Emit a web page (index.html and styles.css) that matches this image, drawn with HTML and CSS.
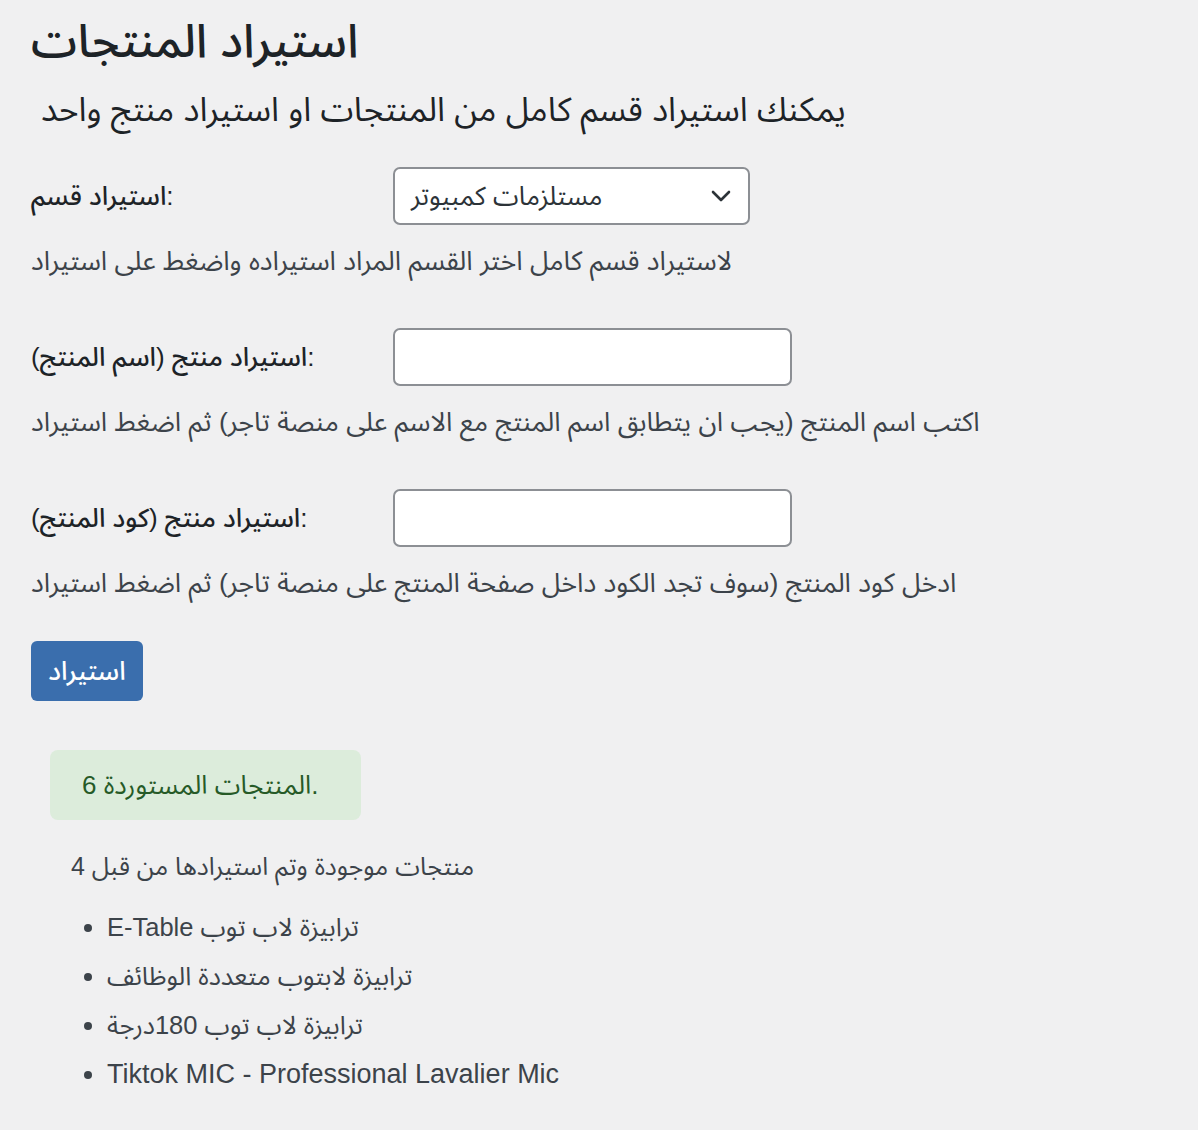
FILE: index.html
```html
<!DOCTYPE html>
<html lang="ar">
<head>
<meta charset="utf-8">
<title>استيراد المنتجات</title>
<link rel="stylesheet" href="styles.css">
</head>
<body>
<div class="wrap">
  <h1 class="title">استيراد المنتجات</h1>
  <h2 class="subtitle">يمكنك استيراد قسم كامل من المنتجات او استيراد منتج واحد</h2>

  <div class="field first">
    <label class="label">استيراد قسم:</label>
    <div class="select">
      <span class="select-text">مستلزمات كمبيوتر</span>
      <svg class="chevron" width="20" height="12" viewBox="0 0 20 12"><path d="M2 2 L10 10 L18 2" fill="none" stroke="#2c3338" stroke-width="2.6" stroke-linecap="round" stroke-linejoin="round"/></svg>
    </div>
  </div>
  <p class="desc">لاستيراد قسم كامل اختر القسم المراد استيراده واضغط على استيراد</p>

  <div class="field">
    <label class="label">استيراد منتج (اسم المنتج):</label>
    <div class="input"></div>
  </div>
  <p class="desc">اكتب اسم المنتج (يجب ان يتطابق اسم المنتج مع الاسم على منصة تاجر) ثم اضغط استيراد</p>

  <div class="field">
    <label class="label">استيراد منتج (كود المنتج):</label>
    <div class="input"></div>
  </div>
  <p class="desc">ادخل كود المنتج (سوف تجد الكود داخل صفحة المنتج على منصة تاجر) ثم اضغط استيراد</p>

  <button class="button">استيراد</button>

  <div class="notice">المنتجات المستوردة 6.</div>

  <p class="summary">منتجات موجودة وتم استيرادها من قبل 4</p>
  <ul class="list">
    <li>E-Table ترابيزة لاب توب</li>
    <li>ترابيزة لابتوب متعددة الوظائف</li>
    <li>ترابيزة لاب توب 180درجة</li>
    <li class="latin">Tiktok MIC - Professional Lavalier Mic</li>
  </ul>
</div>
</body>
</html>
```

FILE: styles.css
```css
html, body {
  margin: 0;
  padding: 0;
  background: #f0f0f1;
}
body {
  font-family: "Liberation Sans", "Noto Sans Arabic", "DejaVu Sans", sans-serif;
  color: #3c434a;
  font-size: 26.7px;
}
.wrap {
  padding: 11px 31px 0 31px;
}
.title {
  margin: 0;
  font-size: 46.5px;
  line-height: 60px;
  font-weight: 500;
  color: #1d2327;
}
.subtitle {
  margin: 17px 0 0 10px;
  font-size: 33.5px;
  line-height: 44px;
  font-weight: 400;
  color: #1d2327;
}
.field {
  display: flex;
  align-items: center;
  height: 58px;
  margin-top: 49px;
}
.field.first {
  margin-top: 35px;
}
.label {
  width: 362px;
  flex: none;
  font-weight: 500;
  color: #1d2327;
  font-size: 26px;
}
.select {
  box-sizing: border-box;
  width: 357px;
  height: 58px;
  background: #fff;
  border: 2px solid #8c8f94;
  border-radius: 7px;
  display: flex;
  align-items: center;
  justify-content: space-between;
  padding: 0 17px 0 16px;
  color: #2c3338;
  font-size: 26px;
}
.chevron {
  display: block;
}
.input {
  box-sizing: border-box;
  width: 399px;
  height: 58px;
  background: #fff;
  border: 2px solid #8c8f94;
  border-radius: 7px;
}
.desc {
  margin: 18px 0 0 0;
  line-height: 36px;
}
.button {
  display: block;
  margin-top: 40px;
  width: 112px;
  height: 60px;
  border: 0;
  border-radius: 6px;
  background: #3a6ead;
  color: #fff;
  font-family: inherit;
  font-size: 26px;
  font-weight: 500;
  padding: 0;
}
.notice {
  margin: 49px 0 0 19px;
  box-sizing: border-box;
  width: 311px;
  height: 70px;
  border-radius: 8px;
  background: #dcecdb;
  color: #265a27;
  display: flex;
  align-items: center;
  padding-left: 32px;
  font-size: 26px;
}
.summary {
  margin: 28px 0 0 40px;
  line-height: 36px;
  font-size: 25px;
}
.list {
  margin: 19px 0 0 0;
  padding-left: 76px;
  line-height: 49px;
  font-size: 25.5px;
}
.list li::marker {
  font-size: 26px;
}
.list .latin {
  font-size: 27px;
}
```
